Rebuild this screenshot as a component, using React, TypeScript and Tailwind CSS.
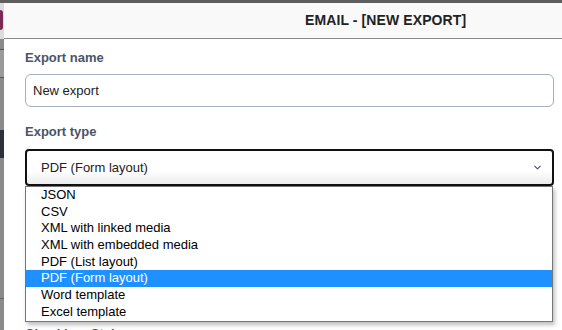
import { ChevronDown } from "lucide-react";

const options = [
  "JSON",
  "CSV",
  "XML with linked media",
  "XML with embedded media",
  "PDF (List layout)",
  "PDF (Form layout)",
  "Word template",
  "Excel template",
];

export default function App() {
  const selected = "PDF (Form layout)";

  return (
    <div
      className="flex h-[330px] w-[562px] overflow-hidden bg-[#5e5e5e] pt-[3px]"
      style={{ fontFamily: '"Liberation Sans", Arial, sans-serif' }}
    >
      {/* dimmed page behind the modal */}
      <div className="flex w-[4px] flex-col bg-[#8a8a8a]">
        <div className="h-[36px] bg-[#dcdcdc] pt-[7px]">
          <div className="h-[20px] w-[3px] rounded-r-full bg-[#7a2a52]" />
        </div>
        <div className="mt-[10px] h-px bg-[#555]" />
        <div className="h-[27px] bg-[#9a9a9a]" />
        <div className="h-px bg-[#555]" />
        <div className="mt-[52px] h-[28px] bg-[#2b323d]" />
        <div className="mt-[140px] h-px bg-[#666]" />
      </div>

      <div className="relative flex flex-1 flex-col bg-white">
        {/* header */}
        <div className="flex h-[36px] shrink-0 items-center border-b border-[#8a8a8a] bg-[#f9f9f9] pl-[301px]">
          <span className="text-[14px] font-bold tracking-[0.1px] text-[#222]">
            EMAIL - [NEW EXPORT]
          </span>
        </div>

        {/* body */}
        <div className="flex flex-col pl-[21px] pr-[8px] pt-[11px]">
          <label className="text-[13px] font-bold leading-[15px] text-[#4a5568]">
            Export name
          </label>
          <div className="mt-[9px] flex h-[33px] items-center rounded-[6px] border border-[#a3aec0] px-[7px] text-[13px] text-[#222]">
            New export
          </div>

          <label className="mt-[17px] text-[13px] font-bold leading-[15px] text-[#4a5568]">
            Export type
          </label>
          <div className="relative mt-[10px]">
            <div className="flex h-[37px] items-center justify-between rounded-[4px] border-2 border-[#111] bg-gradient-to-b from-white from-60% to-[#ececec] pl-[14px] pr-[9px] text-[13px] text-[#222]">
              <span>{selected}</span>
              <ChevronDown className="h-[11px] w-[11px] text-[#4a5568]" strokeWidth={2.5} />
            </div>

            {/* open native-style list */}
            <div className="absolute left-0 right-[1px] top-[37px] z-10 border border-[#767676] bg-white shadow-[2px_3px_4px_rgba(0,0,0,0.25)]">
              {options.map((o) => (
                <div
                  key={o}
                  className={
                    o === selected
                      ? "h-[16.7px] bg-[#1e90ff] pl-[15px] text-[13px] leading-[16.7px] text-white"
                      : "h-[16.7px] pl-[15px] text-[13px] leading-[16.7px] text-black"
                  }
                >
                  {o}
                </div>
              ))}
            </div>
          </div>

          <label className="mt-[140px] text-[13px] font-bold leading-[15px] text-[#4a5568]">
            Checkbox Style
          </label>
        </div>
      </div>
    </div>
  );
}
